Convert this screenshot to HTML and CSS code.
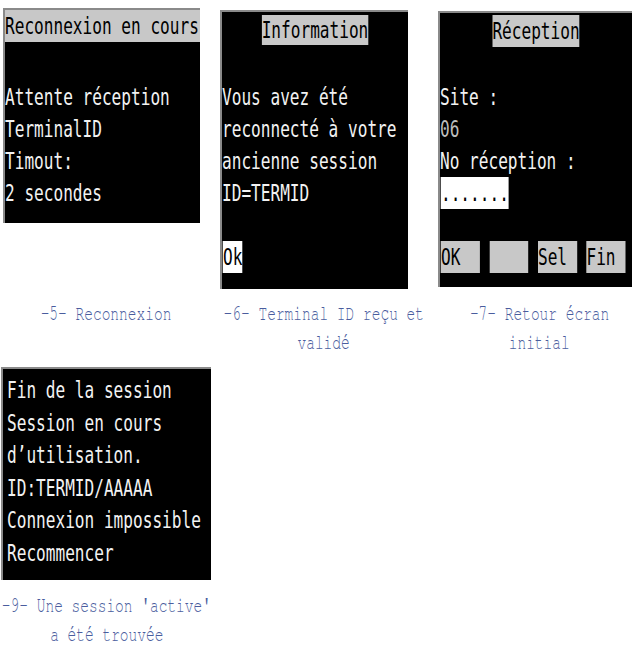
FILE: index.html
```html
<!DOCTYPE html>
<html lang="fr">
<head>
<meta charset="utf-8">
<title>Écrans terminal</title>
<link rel="stylesheet" href="styles.css">
</head>
<body>
<div class="grid">
  <div class="screen s1">
    <div class="content">
      <div class="bar">Reconnexion en cours</div>
      <div class="row">Attente réception</div>
      <div class="row">TerminalID</div>
      <div class="row">Timout:</div>
      <div class="row">2 secondes</div>
    </div>
  </div>
  <div class="screen s2">
    <div class="content">
      <div class="head"><span class="title">Information</span></div>
      <div class="row">Vous avez été</div>
      <div class="row">reconnecté à votre</div>
      <div class="row">ancienne session</div>
      <div class="row">ID=TERMID</div>
      <div class="row"></div>
      <div class="row"><span class="inv">Ok</span></div>
    </div>
  </div>
  <div class="screen s3">
    <div class="content">
      <div class="head"><span class="title">Réception</span></div>
      <div class="row">Site :</div>
      <div class="row dim">06</div>
      <div class="row">No réception :</div>
      <div class="row"><span class="inv field">.......</span></div>
      <div class="row"></div>
      <div class="row keys"><span class="key">OK</span><span class="key"></span><span class="key">Sel</span><span class="key">Fin</span></div>
    </div>
  </div>
  <div class="cap c1"><span>-5- Reconnexion</span></div>
  <div class="cap c2"><span>-6- Terminal ID reçu et</span><span>validé</span></div>
  <div class="cap c3"><span>-7- Retour écran</span><span>initial</span></div>
</div>
<div class="grid second">
  <div class="screen s4">
    <div class="content">
      <div class="row">Fin de la session</div>
      <div class="row">Session en cours</div>
      <div class="row">d’utilisation.</div>
      <div class="row">ID:TERMID/AAAAA</div>
      <div class="row">Connexion impossible</div>
      <div class="row">Recommencer</div>
    </div>
  </div>
  <div class="cap c4"><span>-9- Une session 'active'</span><span>a été trouvée</span></div>
</div>
</body>
</html>
```

FILE: styles.css
```css
html, body {
  margin: 0;
  background: #ffffff;
}

.grid {
  display: grid;
  grid-template-columns: 213px 214px 213px;
  align-items: start;
}

.screen {
  box-sizing: border-box;
  background: #000000;
  border-top: 2px solid #8a8a8a;
  border-left: 2px solid #8a8a8a;
  overflow: hidden;
}

.content {
  transform: scaleX(0.7);
  transform-origin: 0 0;
  font-family: "DejaVu Sans Mono", monospace;
  font-size: 23px;
  color: #f2f2f2;
  white-space: nowrap;
}

.row {
  height: 32px;
  line-height: 32px;
}

.dim {
  color: #bdbdbd;
}

/* screen 1 */
.s1 {
  margin: 8px 0 0 3px;
  width: 197px;
  height: 215px;
}
.s1 .content {
  width: 278.6px;
}
.bar {
  background: #c8c8c8;
  color: #000000;
  height: 32px;
  line-height: 32px;
  margin-bottom: 39px;
}

/* centered title heads */
.head {
  box-sizing: border-box;
  text-align: center;
}
.title {
  display: inline-block;
  vertical-align: top;
  background: #c8c8c8;
  color: #000000;
}

/* screen 2 */
.s2 {
  margin: 10px 0 0 7px;
  width: 188px;
  height: 279px;
}
.s2 .content {
  width: 265.7px;
}
.s2 .head {
  height: 69px;
  padding-top: 3px;
}
.s2 .title {
  height: 30px;
  line-height: 30px;
}

/* screen 3 */
.s3 {
  margin: 11px 0 0 11px;
  width: 194px;
  height: 276px;
}
.s3 .content {
  width: 274.3px;
}
.s3 .head {
  height: 68px;
  padding-top: 2px;
}
.s3 .title {
  height: 32px;
  line-height: 32px;
}

.inv {
  display: inline-block;
  vertical-align: top;
  height: 32px;
  background: #ffffff;
  color: #000000;
  margin-left: 1.4px;
}
.field {
  width: 97px;
}

.keys {
  display: flex;
  gap: 13.6px;
  padding-left: 1.4px;
}
.key {
  width: 55.7px;
  height: 32px;
  background: #c8c8c8;
  color: #000000;
}

/* screen 4 */
.second {
  margin-top: 10px;
}
.s4 {
  margin-left: 1px;
  width: 210px;
  height: 213px;
  padding: 5px 0 0 4px;
}
.s4 .content {
  width: 291px;
}
.s4 .row {
  height: 32.5px;
  line-height: 32.5px;
}

/* captions */
.cap {
  display: flex;
  flex-direction: column;
  align-items: center;
  margin-top: 10px;
}
.cap span {
  display: block;
  white-space: nowrap;
  font-family: "Nimbus Mono PS", "FreeMono", "Courier New", "Liberation Mono", monospace;
  font-size: 22px;
  line-height: 29px;
  color: #4a5d9e;
  transform: scaleX(0.66);
  transform-origin: center;
}
.c2 {
  padding-left: 8px;
}
.c3 {
  padding-left: 12px;
}
.c4 {
  grid-column: 1;
  margin-top: 11px;
}
```
